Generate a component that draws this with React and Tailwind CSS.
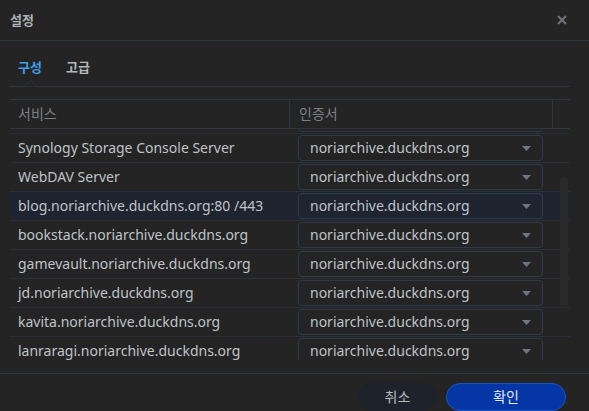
import { useEffect, useRef } from "react";

const rows = [
  "Photo Station",
  "Synology Storage Console Server",
  "WebDAV Server",
  "blog.noriarchive.duckdns.org:80 /443",
  "bookstack.noriarchive.duckdns.org",
  "gamevault.noriarchive.duckdns.org",
  "jd.noriarchive.duckdns.org",
  "kavita.noriarchive.duckdns.org",
  "lanraragi.noriarchive.duckdns.org",
  "mealie.noriarchive.duckdns.org",
];

const CertSelect = () => (
  <div className="flex h-[26px] w-[245px] items-center justify-between rounded-[4px] border border-[#2d3a4a] pl-[11px] pr-[11px]">
    <span className="text-[14px] leading-[20px] text-[#bfc3c8]">noriarchive.duckdns.org</span>
    <svg width="9" height="5" viewBox="0 0 9 5">
      <path d="M0 0 H9 L4.5 5 Z" fill="#6b7585" />
    </svg>
  </div>
);

const App = () => {
  const bodyRef = useRef(null);

  useEffect(() => {
    if (bodyRef.current) bodyRef.current.scrollTop = 24;
  }, []);

  return (
    <div
      className="flex h-[411px] w-[589px] flex-col overflow-hidden bg-[#242424] text-[#bfc3c8]"
      style={{ fontFamily: '"Noto Sans", "Noto Sans CJK KR", sans-serif' }}
    >
      {/* title bar */}
      <div className="flex h-[41px] shrink-0 items-center justify-between border-b border-[#2b333d] pl-[10px] pr-[22px]">
        <span className="text-[13px] leading-[18px] font-semibold text-[#aeb2b7]">설정</span>
        <svg width="10" height="10" viewBox="0 0 10 10">
          <path d="M1 1 L9 9 M9 1 L1 9" stroke="#6f747b" strokeWidth="2" />
        </svg>
      </div>

      {/* tabs */}
      <div className="relative mx-[10px] mr-[19px] flex h-[46px] shrink-0 items-center gap-[24px] border-b border-[#2d3540] pl-[8px] pt-[6px]">
        <span className="text-[13px] leading-[18px] font-semibold text-[#3d9fe8]">구성</span>
        <span className="text-[13px] leading-[18px] font-semibold text-[#b5b9be]">고급</span>
        <svg
          className="absolute left-[14px] bottom-[-1px]"
          width="13"
          height="7"
          viewBox="0 0 13 7"
        >
          <path d="M0 6.5 L6.5 0.5 L13 6.5" fill="#242424" stroke="#2d3540" strokeWidth="1" />
        </svg>
      </div>

      {/* table */}
      <div className="relative mx-[10px] mr-[19px] mt-[12px] flex flex-col">
        <div className="flex h-[30px] shrink-0 border-y border-[#2d3540] text-[14px] leading-[20px] text-[#7b8087]">
          <div className="flex w-[280px] items-center border-r border-[#2d3540] pl-[8px]">서비스</div>
          <div className="flex w-[263px] items-center border-r border-[#2d3540] pl-[9px]">인증서</div>
          <div className="flex-1" />
        </div>
        <div ref={bodyRef} className="h-[231px] overflow-hidden">
          {rows.map((name) => (
            <div
              key={name}
              className={`flex h-[29px] items-center border-b border-[#2b3038] ${
                name.startsWith("blog") ? "bg-[#1e2430]" : ""
              }`}
            >
              <div className="w-[280px] pl-[8px] text-[14px] leading-[20px] text-[#bfc3c8]">{name}</div>
              <div className="w-[263px] pl-[8px]">
                <CertSelect />
              </div>
              <div className="flex-1" />
            </div>
          ))}
        </div>
        <div className="absolute right-[2px] top-[78px] h-[128px] w-[8px] rounded-t-[4px] bg-[#2a2a2a]" />
      </div>

      {/* footer */}
      <div className="mt-[13px] flex flex-1 items-start justify-end gap-[9px] border-t border-[#2b333d] pr-[23px] pt-[9px]">
        <button className="h-[28px] w-[79px] rounded-full bg-[#1e232b] text-[14px] leading-[20px] text-[#b5b9be]">
          취소
        </button>
        <button className="h-[28px] w-[120px] rounded-full border border-[#1854c4] bg-[#0437a5] text-[14px] leading-[20px] text-[#e3e8f2]">
          확인
        </button>
      </div>
    </div>
  );
};

export default App;
